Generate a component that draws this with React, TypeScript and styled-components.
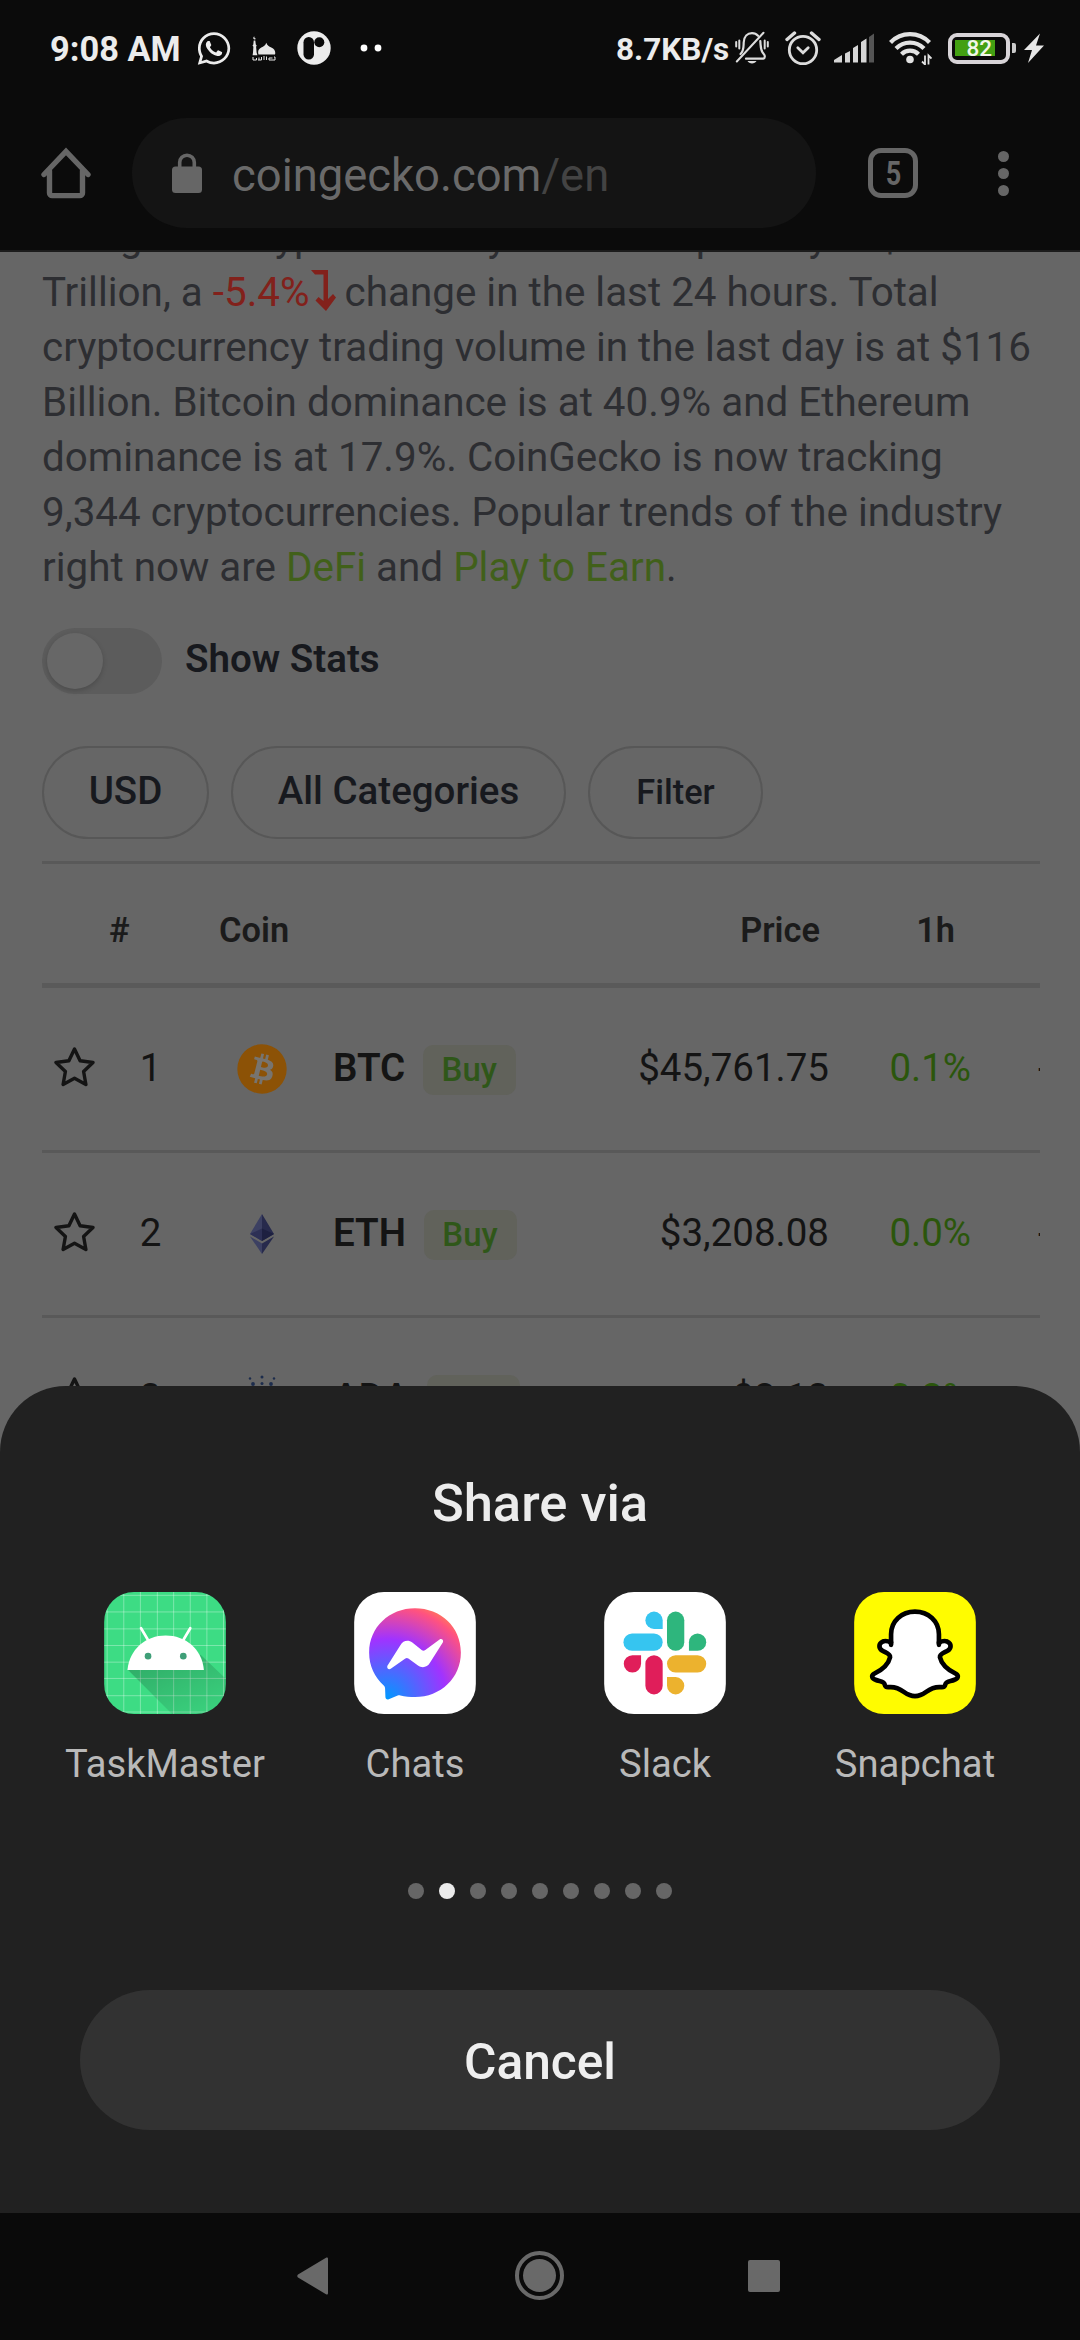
import React from "react";
import styled, { createGlobalStyle } from "styled-components";
import { FaWhatsapp } from "react-icons/fa";

const GlobalStyle = createGlobalStyle`
  * { box-sizing: border-box; }
  html, body { margin: 0; padding: 0; background: #0b0b0b; }
  body { font-family: Roboto, "Liberation Sans", sans-serif; }
`;

const Screen = styled.div`
  position: relative;
  width: 1080px;
  height: 2340px;
  display: flex;
  flex-direction: column;
  overflow: hidden;
  background: #0b0b0b;
`;

/* ---------- status bar ---------- */
const StatusBar = styled.header`
  height: 96px;
  flex: none;
  display: flex;
  justify-content: space-between;
  padding: 0 36px 0 50px;
  color: #ececec;
`;

const StatusGroup = styled.div`
  display: flex;
  align-items: center;
`;

const Clock = styled.span`
  width: 147px;
  font-size: 34.4px;
  font-weight: 700;
  white-space: nowrap;
  padding-top: 2px;
`;

const Speed = styled.span`
  width: 119px;
  font-size: 31.5px;
  font-weight: 700;
  white-space: nowrap;
  padding-top: 2px;
`;

const Slot = styled.span<{ $w: number; $after?: number }>`
  display: flex;
  width: ${(p) => p.$w}px;
  margin-right: ${(p) => p.$after ?? 0}px;
  flex: none;

  svg { display: block; }
`;

const Battery = styled.span`
  width: 62px;
  height: 31px;
  border: 4.5px solid #d8d4d8;
  border-radius: 9px;
  padding: 3px;
  display: flex;
`;

const BatteryFill = styled.span`
  width: 40px;
  height: 16px;
  background: #43a012;
  display: flex;
  align-items: center;
  justify-content: flex-end;
  padding: 2px 3px 0 0;
  color: #f2f7e9;
  font-size: 22.5px;
  font-weight: 500;
  line-height: 1;
`;

const BatteryTip = styled.span`
  width: 4px;
  height: 10px;
  margin: 0 8px 0 2px;
  border-radius: 0 2px 2px 0;
  background: #c9c9c9;
`;

/* ---------- browser toolbar ---------- */
const Toolbar = styled.div`
  height: 156px;
  flex: none;
  display: flex;
  align-items: flex-start;
  padding: 22px 71px 0 41px;
  border-bottom: 2px solid #1c1c1c;
`;

const ToolIcon = styled.span<{ $w: number }>`
  display: flex;
  width: ${(p) => p.$w}px;
  height: 110px;
  align-items: center;
  flex: none;
`;

const AddressPill = styled.div`
  width: 684px;
  height: 110px;
  margin-right: 52px;
  border-radius: 55px;
  background: #141414;
  display: flex;
  align-items: center;
  padding-left: 40px;
  gap: 30px;
`;

const Url = styled.span`
  font-size: 45.4px;
  color: #6a6a6a;
  padding-top: 4px;
  white-space: nowrap;
`;

const UrlPath = styled.span`
  color: #434343;
`;

const TabCount = styled.span`
  width: 50px;
  height: 50px;
  margin: 30px 80px 0 0;
  border: 5.5px solid #666;
  border-radius: 13px;
  display: flex;
  align-items: center;
  justify-content: center;
  color: #666;
  font-size: 33px;
  font-weight: 700;
  line-height: 1;
`;

const TabDigit = styled.span`
  transform: scaleX(0.82);
`;

const Kebab = styled.span`
  height: 110px;
  display: flex;
  flex-direction: column;
  align-items: center;
  justify-content: center;
  gap: 6px;
`;

const KebabDot = styled.i`
  width: 11px;
  height: 11px;
  border-radius: 50%;
  background: #666;
`;

/* ---------- page ---------- */
const Page = styled.main`
  flex: 1;
  min-height: 0;
  overflow: hidden;
  background: #666;
  padding: 0 40px 0 42px;
`;

const Summary = styled.p`
  margin: -42px 0 0;
  font-size: 40.38px;
  line-height: 55px;
  color: #2d2e32;
`;

const Line = styled.span`
  display: block;
  white-space: nowrap;
`;

const Drop = styled.span`
  color: #82211b;

  svg { vertical-align: -5px; margin: 0 -1px 0 1px; }
`;

const Link = styled.a`
  color: #41601a;
`;

const ToggleRow = styled.div`
  display: flex;
  align-items: center;
  height: 66px;
  margin-top: 33px;
  gap: 23px;
`;

const Track = styled.span`
  width: 120px;
  height: 66px;
  border-radius: 33px;
  background: #5c5c5c;
  padding: 5px;
`;

const Knob = styled.span`
  display: block;
  width: 56px;
  height: 56px;
  border-radius: 50%;
  background: #676767;
  box-shadow: 0 2px 5px rgba(0, 0, 0, 0.18);
`;

const ToggleLabel = styled.span`
  font-size: 38.5px;
  font-weight: 600;
  color: #17191e;
  padding-bottom: 5px;
`;

const Chips = styled.div`
  display: flex;
  gap: 22px;
  margin: 52px 0 22px;
`;

const Chip = styled.button<{ $w: number; $small?: boolean }>`
  width: ${(p) => p.$w}px;
  height: 93px;
  border: 2px solid #575757;
  border-radius: 47px;
  background: none;
  padding: 0 0 ${(p) => (p.$small ? 1 : 4)}px;
  font-family: inherit;
  font-size: ${(p) => (p.$small ? 34.4 : 38.5)}px;
  font-weight: 500;
  color: #17191e;
  white-space: nowrap;
`;

const HeadRow = styled.div`
  height: 127px;
  border-top: 3px solid #595959;
  border-bottom: 5px solid #5a5a5a;
  padding-top: 13px;
  display: grid;
  grid-template-columns: 156px 200px 1fr 135px 85px;
  align-items: center;
  font-size: 34.4px;
  font-weight: 600;
  color: #1b1b1b;
`;

const HeadCell = styled.span<{ $right?: boolean; $pad?: number }>`
  text-align: ${(p) => (p.$right ? "right" : "left")};
  padding-left: ${(p) => p.$pad ?? 0}px;
`;

const CoinRow = styled.div`
  height: 165px;
  border-bottom: 3px solid #595959;
  display: grid;
  grid-template-columns: 66px 85px 140px 1fr 142px 67px 2px;
  align-items: center;
  overflow: hidden;
  font-size: 38.5px;
  color: #141414;
`;

const StarCell = styled.span`
  padding: 0 0 4px 12px;
  svg { display: block; }
`;

const RankCell = styled.span`
  text-align: center;
  padding-bottom: 3px;
`;

const LogoCell = styled.span`
  display: flex;
  justify-content: center;
  padding-right: 2px;
`;

const NameCell = styled.span`
  display: flex;
  align-items: center;
  justify-content: space-between;
`;

const Ticker = styled.span`
  display: flex;
  align-items: center;
  gap: 17.5px;
`;

const TickerName = styled.b`
  font-weight: 600;
  padding-bottom: 3px;
`;

const Buy = styled.span`
  width: 93px;
  height: 50px;
  margin-top: 2px;
  border-radius: 10px;
  background: #61625b;
  color: #2f5719;
  font-size: 33px;
  font-weight: 500;
  display: flex;
  align-items: center;
  justify-content: center;
  padding-bottom: 1px;
`;

const Price = styled.span`
  padding-bottom: 3px;
`;

const Change = styled.span`
  text-align: right;
  color: #2b560c;
  padding-bottom: 3px;
`;

const NextCell = styled.span`
  grid-column: 7;
  overflow: hidden;
  padding-bottom: 3px;
`;

/* ---------- share sheet ---------- */
const Sheet = styled.section`
  position: absolute;
  left: 0;
  right: 0;
  bottom: 127px;
  height: 827px;
  border-radius: 66px 66px 0 0;
  background: #212121;
  display: flex;
  flex-direction: column;
  align-items: center;
`;

const SheetTitle = styled.h2`
  margin: 85px 0 0;
  height: 64px;
  font-size: 52.5px;
  line-height: 64px;
  font-weight: 500;
  color: #ececec;
`;

const AppGrid = styled.div`
  width: 1000px;
  margin-top: 57px;
  display: grid;
  grid-template-columns: repeat(4, 1fr);
`;

const AppItem = styled.div`
  display: flex;
  flex-direction: column;
  align-items: center;
`;

const AppTile = styled.span`
  width: 122px;
  height: 122px;
  border-radius: 30px;
  overflow: hidden;
  svg { display: block; }
`;

const AppLabel = styled.span`
  margin-top: 27px;
  font-size: 38.2px;
  line-height: 46px;
  color: #b9b9b9;
`;

const Dots = styled.div`
  display: flex;
  gap: 15px;
  margin-top: 96px;
`;

const Dot = styled.i<{ $on: boolean }>`
  width: 16px;
  height: 16px;
  border-radius: 50%;
  background: ${(p) => (p.$on ? "#ebebeb" : "#666")};
`;

const Cancel = styled.button`
  width: 920px;
  height: 140px;
  margin-top: 91px;
  border: 0;
  border-radius: 70px;
  background: #323232;
  color: #efefef;
  font-family: inherit;
  font-size: 49.7px;
  font-weight: 500;
  padding: 4px 0 0;
`;

/* ---------- system navigation ---------- */
const NavBar = styled.nav`
  height: 127px;
  flex: none;
  display: flex;
  align-items: center;
  background: #0a0a0a;
  padding: 0 0 2px 297px;
`;

const Recent = styled.i`
  width: 32px;
  height: 32px;
  margin-left: 184px;
  border-radius: 2px;
  background: #696969;
`;

const HomeRing = styled.i`
  width: 49px;
  height: 49px;
  margin-left: 187px;
  border: 4px solid #696969;
  border-radius: 50%;
  padding: 4px;
  display: flex;

  &::after {
    content: "";
    flex: 1;
    border-radius: 50%;
    background: #696969;
  }
`;

/* ---------- drawings ---------- */
const Mosque = () => (
  <svg width="24" height="25" viewBox="0 0 24 25" fill="#e6e6e6">
    <path d="M1.700 4.500h1.600l.5 4 .9 1-.6 1.300.5 5.700.8 2.800H.6L1 16.500l.4-5.700L.5 9.500l.8-1zM2.500 0.500a1.500 1.500 0 1 0 1.500 2.300A1.800 1.800 0 0 1 2.500.5zM6.500 18.500c-1-3 0-5.500 2.800-7 2.200-1.100 4.200-2 5-4.700.8 2.700 2.800 3.600 5 4.700 3.500 1.700 4.500 4 3.700 7z" />
    <path d="M1 21v3h3.500v-2M7 24v-2.500M6 24h3.500v-3M12 24v-4M14.500 24v-3.500M17 24v-2h3.500M22 21h1v3h-6" fill="none" stroke="#e6e6e6" strokeWidth="1" />
  </svg>
);

const PCircle = () => (
  <svg width="34" height="34" viewBox="0 0 34 34">
    <circle cx="17" cy="17" r="16.700" fill="#ececec" />
    <rect x="6.500" y="6" width="10.500" height="22.500" rx="5.200" fill="#0b0b0b" />
    <circle cx="22.300" cy="11.200" r="5" fill="#0b0b0b" />
  </svg>
);

const TwoDots = () => (
  <svg width="22" height="8" viewBox="0 0 22 8" fill="#fff">
    <circle cx="4" cy="4" r="3.400" />
    <circle cx="18" cy="4" r="3.400" />
  </svg>
);

const BellOff = () => (
  <svg width="34" height="34" viewBox="0 0 34 34" fill="none" stroke="#dcdcdc" strokeWidth="2.200" strokeLinecap="round">
    <path d="M5.500 23c3.500-3 3-7.500 3.200-11.500C9 5.500 12.500 2.200 17 2.200c2.600 0 4.600 1 6 2.600M25.300 10c.6 5-.4 9.500 3.800 13.500.8.800 1.300 4-.8 4.200H11" />
    <path d="M1.800 30.500 28.500 1.800M1.200 11v4.500M4.300 9.500v8M29.700 9.500v8M32.800 11v4.500" strokeWidth="2" />
    <path d="M12.500 30h9c-1.500 3.300-7.500 3.300-9 0z" fill="#dcdcdc" stroke="none" />
  </svg>
);

const Alarm = () => (
  <svg width="36" height="36" viewBox="0 0 36 36" fill="none" stroke="#dcdcdc" strokeWidth="2.800" strokeLinecap="round">
    <circle cx="18" cy="20" r="13.700" />
    <path d="m12.800 17.800 5.200 5 5.200-5" />
    <path d="M2 9.500 9.500 3M34 9.500 26.500 3" strokeWidth="3.400" />
  </svg>
);

const Signal = () => (
  <svg width="40" height="30" viewBox="0 0 40 30" fill="#d6d6d6">
    <path d="M0 29.500v-2.500l8-5v7.500zM11 20.500l5-2.500v11.500h-5zM19 15l5-3v17.500h-5zM27 9l5.500-3.500v24H27z" />
    <path d="M35 4l5-3.500v29h-5z" fill="#555" />
  </svg>
);

const Wifi = () => (
  <svg width="43" height="34" viewBox="0 0 43 34" fill="none" stroke="#e2e2e2" strokeWidth="4.200">
    <path d="M1.500 11.500a27 27 0 0 1 39 0M7 17.500a19.500 19.500 0 0 1 28 0M12.500 23.200a12 12 0 0 1 17 0" />
    <circle cx="21" cy="28.500" r="3.800" fill="#e2e2e2" stroke="none" />
    <path d="M36 24.500v9l-3-3M39.500 33.500v-9l3 3" strokeWidth="1.800" />
  </svg>
);

const Bolt = () => (
  <svg width="20" height="30" viewBox="0 0 20 30" fill="#e6e6e6">
    <path d="M16 .5 0 17h8L4 30l16-17.500h-8z" />
  </svg>
);

const HomeIcon = () => (
  <svg width="50" height="52" viewBox="0 0 50 52" fill="none" stroke="#666" strokeWidth="5.400" strokeLinejoin="round" strokeLinecap="round">
    <path d="M3 27.500 25 4.500l22 23" strokeLinejoin="miter" />
    <path d="M8.500 24v22a2.600 2.600 0 0 0 2.600 2.600h27.800a2.600 2.600 0 0 0 2.600-2.600V24" />
  </svg>
);

const Lock = () => (
  <svg width="30" height="40" viewBox="0 0 30 40">
    <rect x="0" y="13.500" width="30" height="26.500" rx="3.500" fill="#666" />
    <path d="M7.700 15V9.500a7.300 7.300 0 0 1 14.600 0V15" fill="none" stroke="#666" strokeWidth="3.600" />
  </svg>
);

const DownTurn = () => (
  <svg width="25" height="41" viewBox="0 0 25 41">
    <path d="M0 0h17v29l5-5 3 3.500L15 41 4.500 30.500 7.500 27l5 4V4.500H4z" fill="#82211b" />
  </svg>
);

const Star = () => (
  <svg width="41" height="40" viewBox="0 0 41 40" fill="none" stroke="#141414" strokeWidth="3.400" strokeLinejoin="round">
    <path d="m20.500 2 5.600 11.800 12.900 1.700-9.400 9 2.300 13-11.400-6.200-11.400 6.200 2.300-13-9.400-9 12.900-1.700z" />
  </svg>
);

const BtcLogo = () => (
  <svg width="50" height="50" viewBox="0 0 32 32">
    <circle cx="16" cy="16" r="15.800" fill="#8c5206" />
    <path
      fill="#77746f"
      d="M23.189 14.020c.314-2.096-1.283-3.223-3.465-3.975l.708-2.840-1.728-.43-.69 2.765c-.454-.114-.920-.220-1.385-.326l.695-2.783L15.596 6l-.708 2.839c-.376-.086-.746-.170-1.104-.260l.002-.009-2.384-.595-.460 1.846s1.283.294 1.256.312c.700.175.826.638.805 1.006l-.806 3.235c.048.012.110.030.180.057l-.183-.045-1.130 4.532c-.086.212-.303.531-.793.410.018.025-1.256-.313-1.256-.313l-.858 1.978 2.250.561c.418.105.828.215 1.231.318l-.715 2.872 1.727.430.708-2.840c.472.127.930.245 1.378.357l-.706 2.828 1.728.430.715-2.866c2.948.558 5.164.333 6.097-2.333.752-2.146-.037-3.385-1.588-4.192 1.130-.260 1.980-1.003 2.207-2.538zm-3.950 5.538c-.533 2.147-4.148.986-5.320.695l.950-3.805c1.172.293 4.929.872 4.370 3.110zm.535-5.569c-.487 1.953-3.495.960-4.470.717l.860-3.450c.975.243 4.118.696 3.610 2.733z"
    />
  </svg>
);

const EthLogo = () => (
  <svg width="24" height="40" viewBox="0 0 24 40">
    <path d="M12 0v27L0 20z" fill="#3c4062" />
    <path d="M12 0v27l12-7z" fill="#272a4c" />
    <path d="M12 14.500V27L0 20z" fill="#2d3055" />
    <path d="M12 14.500V27l12-7z" fill="#1d2040" />
    <path d="M0 22.500 12 29.500V40z" fill="#3c4062" />
    <path d="M24 22.500 12 29.500V40z" fill="#272a4c" />
  </svg>
);

const AdaLogo = () => (
  <svg width="50" height="50" viewBox="0 0 50 50" fill="#1c2c4c">
    <circle cx="25" cy="3" r="1.500" />
    <circle cx="13" cy="4.500" r="1.200" />
    <circle cx="37" cy="4.500" r="1.200" />
    <circle cx="16" cy="10" r="1.900" />
    <circle cx="25" cy="9.500" r="1.500" />
    <circle cx="34" cy="10" r="1.900" />
    <circle cx="20" cy="19" r="3" />
    <circle cx="30" cy="19" r="3" />
    <circle cx="14" cy="26" r="3" />
    <circle cx="36" cy="26" r="3" />
    <circle cx="20" cy="33" r="3" />
    <circle cx="30" cy="33" r="3" />
  </svg>
);

const gridX = [201, 251, 301, 352, 401, 451, 501, 551];
const gridY = [105, 155, 206, 256, 306, 355, 407, 456];

const AndroidIcon = () => (
  <svg width="122" height="122" viewBox="192 95 366 367">
    <defs>
      <linearGradient id="shade" x1="0" y1="0" x2="0.7" y2="1">
        <stop offset="0" stopColor="#000" stopOpacity="0.24" />
        <stop offset="1" stopColor="#000" stopOpacity="0.06" />
      </linearGradient>
    </defs>
    <rect x="192" y="95" width="366" height="367" fill="#3ddc84" />
    <g stroke="#fff" strokeOpacity="0.34" strokeWidth="3">
      {gridX.map((x) => <path key={x} d={`M${x} 95v367`} />)}
      {gridY.map((y) => <path key={y} d={`M192 ${y}h366`} />)}
    </g>
    <path d="M264 330 396 462H558V356L482 284z" fill="url(#shade)" />
    <path d="m303 204 20 34M451 204l-20 34" stroke="#fff" strokeWidth="8" strokeLinecap="round" />
    <path d="M262 330C268 266 318 226 377 226S487 266 492 330z" fill="#fff" />
    <circle cx="324" cy="288" r="10" fill="#3f9f78" />
    <circle cx="430" cy="288" r="10" fill="#3f9f78" />
  </svg>
);

const MessengerIcon = () => (
  <svg width="122" height="122" viewBox="942 95 366 367">
    <defs>
      <radialGradient id="bubble" cx="0.19" cy="0.99" r="1.09">
        <stop offset="0" stopColor="#0099ff" />
        <stop offset="0.6" stopColor="#a033ff" />
        <stop offset="0.93" stopColor="#ff5280" />
        <stop offset="1" stopColor="#ff7061" />
      </radialGradient>
    </defs>
    <rect x="942" y="95" width="366" height="367" fill="#fff" />
    <path
      d="M1125 144c-77 0-138 57-138 133 0 40 17 75 44 99 3 3 4 6 4 10l1 25c0 6 5 9 10 7l27-12c3-1 5-1 8 0 14 4 29 5 44 5 77 0 138-57 138-134s-61-133-138-133z"
      fill="url(#bubble)"
    />
    <path
      d="M1042 317 1081 255c8-14 24-17 36-8l29 23c3 2 6 2 9 0l44-32c6-4 13 2 10 8l-39 62c-8 14-24 17-36 8l-29-21c-3-2-6-2-9 0l-44 31c-6 4-13-2-10-9z"
      fill="#fff"
    />
  </svg>
);

const SlackIcon = () => (
  <svg width="122" height="122" viewBox="192 95 366 367">
    <rect x="192" y="95" width="366" height="367" fill="#fff" />
    <g fill="#36c5f0">
      <path d="M342 154a26 26 0 0 0 0 52h26v-26a26 26 0 0 0-26-26z" />
      <rect x="250" y="220" width="118" height="52" rx="26" />
    </g>
    <g fill="#2eb67d">
      <rect x="381" y="154" width="52" height="118" rx="26" />
      <path d="M447 272v-26a26 26 0 1 1 26 26z" />
    </g>
    <g fill="#e01e5a">
      <path d="M303 285v26a26 26 0 1 1-26-26z" />
      <rect x="316" y="285" width="52" height="118" rx="26" />
    </g>
    <g fill="#ecb22e">
      <rect x="381" y="285" width="118" height="52" rx="26" />
      <path d="M381 351h26a26 26 0 1 1-26 26z" />
    </g>
  </svg>
);

const SnapchatIcon = () => (
  <svg width="122" height="122" viewBox="942 95 366 367">
    <rect x="942" y="95" width="366" height="367" fill="#fffc00" />
    <path
      d="M1125 154C1085 154 1053 182 1053 222V248C1045 243 1036 241 1028 244C1014 250 1016 264 1026 271C1037 278 1051 281 1050 291C1044 318 1016 334 1002 341C992 347 996 356 1006 359C1018 364 1030 362 1033 371C1036 384 1040 381 1052 381C1090 381 1092 408 1125 408C1158 408 1160 381 1198 381C1210 381 1214 384 1217 371C1220 362 1232 364 1244 359C1254 356 1258 347 1248 341C1234 334 1206 318 1200 291C1199 281 1213 278 1224 271C1234 264 1236 250 1222 244C1214 241 1205 243 1197 248V222C1197 182 1165 154 1125 154Z"
      fill="#fff"
      stroke="#000"
      strokeWidth="14"
      strokeLinejoin="round"
    />
    <path d="M1053 246v8M1197 246v8" stroke="#000" strokeWidth="14" strokeLinecap="round" />
  </svg>
);

const BackTriangle = () => (
  <svg width="31" height="38" viewBox="0 0 31 38" fill="#696969">
    <path d="M29 .8c1-.8 2-.3 2 1v34.400c0 1.300-1 1.800-2 1L1 20.500c-1-.8-1-2.200 0-3z" />
  </svg>
);

const coins = [
  { rank: 1, symbol: "BTC", price: "$45,761.75", change: "0.1%", logo: <BtcLogo /> },
  { rank: 2, symbol: "ETH", price: "$3,208.08", change: "0.0%", logo: <EthLogo /> },
  { rank: 3, symbol: "ADA", price: "$2.13", change: "0.2%", logo: <AdaLogo /> },
];

const apps = [
  { name: "TaskMaster", icon: <AndroidIcon /> },
  { name: "Chats", icon: <MessengerIcon /> },
  { name: "Slack", icon: <SlackIcon /> },
  { name: "Snapchat", icon: <SnapchatIcon /> },
];

export default function App() {
  return (
    <>
      <GlobalStyle />
      <Screen>
        <StatusBar>
          <StatusGroup>
            <Clock>9:08 AM</Clock>
            <Slot $w={34} $after={21}><FaWhatsapp size={37} /></Slot>
            <Slot $w={24} $after={21}><Mosque /></Slot>
            <Slot $w={34} $after={29}><PCircle /></Slot>
            <Slot $w={22}><TwoDots /></Slot>
          </StatusGroup>
          <StatusGroup>
            <Speed>8.7KB/s</Speed>
            <Slot $w={34} $after={16}><BellOff /></Slot>
            <Slot $w={36} $after={13}><Alarm /></Slot>
            <Slot $w={40} $after={15}><Signal /></Slot>
            <Slot $w={43} $after={16}><Wifi /></Slot>
            <Battery><BatteryFill>82</BatteryFill></Battery>
            <BatteryTip />
            <Slot $w={20}><Bolt /></Slot>
          </StatusGroup>
        </StatusBar>

        <Toolbar>
          <ToolIcon $w={91}><HomeIcon /></ToolIcon>
          <AddressPill>
            <Lock />
            <Url>coingecko.com<UrlPath>/en</UrlPath></Url>
          </AddressPill>
          <TabCount><TabDigit>5</TabDigit></TabCount>
          <Kebab><KebabDot /><KebabDot /><KebabDot /></Kebab>
        </Toolbar>

        <Page>
          <Summary>
            <Line>The global cryptocurrency market cap today is $2.25</Line>
            <Line>Trillion, a <Drop>-5.4%<DownTurn /></Drop> change in the last 24 hours. Total</Line>
            <Line>cryptocurrency trading volume in the last day is at $116</Line>
            <Line>Billion. Bitcoin dominance is at 40.9% and Ethereum</Line>
            <Line>dominance is at 17.9%. CoinGecko is now tracking</Line>
            <Line>9,344 cryptocurrencies. Popular trends of the industry</Line>
            <Line>right now are <Link>DeFi</Link> and <Link>Play to Earn</Link>.</Line>
          </Summary>

          <ToggleRow>
            <Track><Knob /></Track>
            <ToggleLabel>Show Stats</ToggleLabel>
          </ToggleRow>

          <Chips>
            <Chip $w={167}>USD</Chip>
            <Chip $w={335}>All Categories</Chip>
            <Chip $w={175} $small>Filter</Chip>
          </Chips>

          <HeadRow>
            <HeadCell $pad={67}>#</HeadCell>
            <HeadCell $pad={21}>Coin</HeadCell>
            <HeadCell $right>Price</HeadCell>
            <HeadCell $right>1h</HeadCell>
          </HeadRow>
          {coins.map((c) => (
            <CoinRow key={c.symbol}>
              <StarCell><Star /></StarCell>
              <RankCell>{c.rank}</RankCell>
              <LogoCell>{c.logo}</LogoCell>
              <NameCell>
                <Ticker>
                  <TickerName>{c.symbol}</TickerName>
                  <Buy>Buy</Buy>
                </Ticker>
                <Price>{c.price}</Price>
              </NameCell>
              <Change>{c.change}</Change>
              <NextCell>-</NextCell>
            </CoinRow>
          ))}
        </Page>

        <Sheet>
          <SheetTitle>Share via</SheetTitle>
          <AppGrid>
            {apps.map((a) => (
              <AppItem key={a.name}>
                <AppTile>{a.icon}</AppTile>
                <AppLabel>{a.name}</AppLabel>
              </AppItem>
            ))}
          </AppGrid>
          <Dots>
            {Array.from({ length: 9 }, (_, i) => <Dot key={i} $on={i === 1} />)}
          </Dots>
          <Cancel>Cancel</Cancel>
        </Sheet>

        <NavBar>
          <BackTriangle />
          <HomeRing />
          <Recent />
        </NavBar>
      </Screen>
    </>
  );
}
